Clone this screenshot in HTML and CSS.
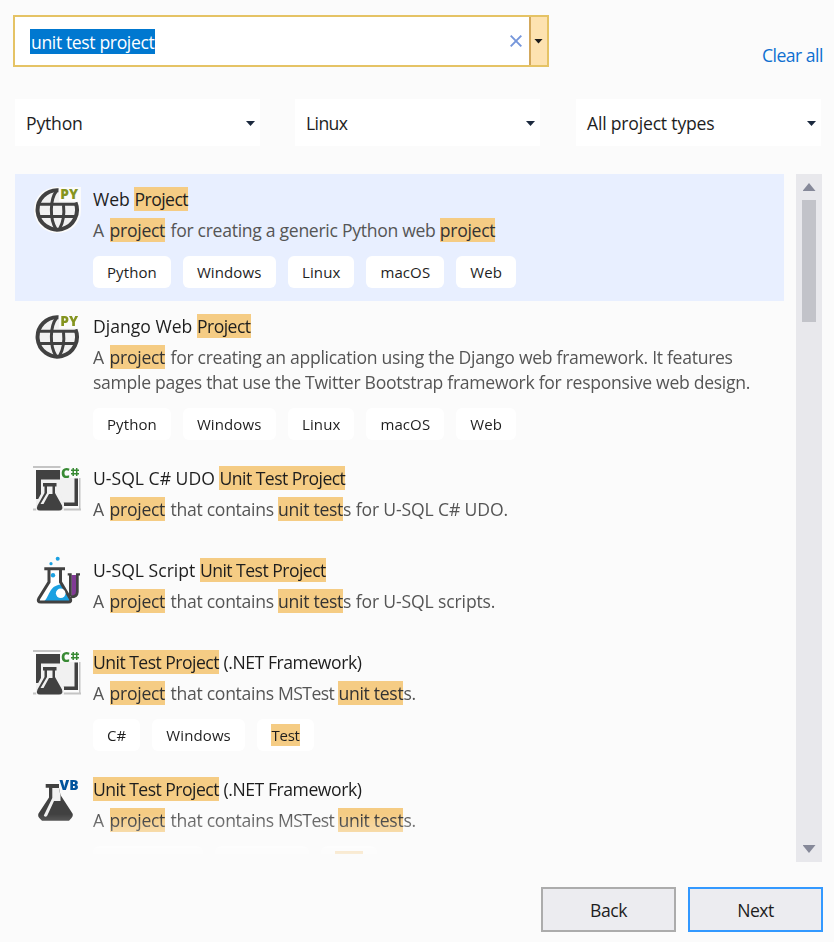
FILE: index.html
```html
<!DOCTYPE html>
<html lang="en">
<head>
<meta charset="utf-8">
<title>Create a new project</title>
<link rel="stylesheet" href="styles.css">
</head>
<body>
<svg class="defs" aria-hidden="true">
  <symbol id="globe" viewBox="0 0 48 48">
    <path d="M23 0C10 1 1 10 1 23s10 23 23.500 23 23.500-10 23.500-23V0z" fill="#fbfbfb"/>
    <circle cx="24.500" cy="23" r="19.500" fill="#f1f1f1"/>
    <path d="M25.500 3.300A19.700 19.700 0 1 0 42.500 15.500" fill="none" stroke="#414141" stroke-width="4"/>
    <path d="M6 17.300H44M6 29.500H43" fill="none" stroke="#414141" stroke-width="3"/>
    <path d="M23.500 4C17 12 16.500 32 23 42M30.500 18C31.500 27 30.500 35 26.500 42" fill="none" stroke="#414141" stroke-width="3"/>
    <path d="M26 0H48V14.500H26z" fill="#fbfbfb"/>
    <text x="27.300" y="12.300" class="badge" fill="#84941f" textLength="17.800" lengthAdjust="spacingAndGlyphs">PY</text>
  </symbol>
  <symbol id="cs" viewBox="0 0 48 48">
    <path d="M0 0H28V2H0zM0 42.500H5V44.500H0zM29 42.500H48V44.500H29zM46 12H47.500V42.500H46z" fill="#c4c4c4"/>
    <path d="M3 4H45V40H3z" fill="#f1f1f1"/>
    <path d="M3 4H27V13.500H8V33H3zM41.500 12.500H45V40H28V36.500H41.500z" fill="#414141"/>
    <path d="M8.500 15H25V22L31 37V45H3V37L8.500 27z" fill="#f1f1f1"/>
    <path d="M10 17H23.500V20.500H22V27L29 39.500Q30.500 44.500 26 44.500H7Q2.500 44.500 4.500 39.500L11.500 27V20.500H10z" fill="#414141"/>
    <path d="M14 20.500H19.500V28H16L10.500 38H7.500L14 27z" fill="#f1f1f1"/>
    <path d="M27.500 0H48V12H27.500z" fill="#fbfbfb"/>
    <text x="28" y="12.300" class="badge cs" fill="#388a34" textLength="9" lengthAdjust="spacingAndGlyphs">C</text>
    <path d="M40.200 2V10M43.700 2V10M38 4.300H46M38 7.700H46" stroke="#388a34" stroke-width="1.500"/>
  </symbol>
  <symbol id="usql" viewBox="0 0 48 52">
    <path d="M38.500 19H43V37Q42.500 41 38.500 40z" fill="#813a95"/>
    <path d="M34.700 17.300H38.700V40H36V19.500H34.700zM43 17.300H47V19.500H45.700V36Q45.500 42.300 38 42.300V39.500Q43 39.500 43 35z" fill="#414141"/>
    <path d="M16 14H27V27L38 46H5L16 27z" fill="#fff"/>
    <path d="M10 46C17 42 15 29.500 28 28.500L38 46H10z" fill="#1ba1e2"/>
    <path d="M11.300 12.700H32M16 13V26L5.800 42.500Q4 46 8 46H35Q39 46 37.200 42.500L27.500 26V13" fill="none" stroke="#414141" stroke-width="3"/>
    <circle cx="27.700" cy="37.300" r="4.800" fill="#fff"/>
    <circle cx="20" cy="19.300" r="2.200" fill="#1ba1e2"/>
    <circle cx="18" cy="7.700" r="1.600" fill="#1ba1e2"/>
    <circle cx="24.700" cy="2.700" r="2" fill="#1ba1e2"/>
  </symbol>
  <symbol id="vb" viewBox="0 0 48 48">
    <path d="M12.700 7H26V11L27.500 18L39.500 36.500Q40.500 39 38.500 41L36 43.700H9L6.300 41Q4.500 39 5.500 36.500L16 20.500V10.700H12.700z" fill="#414141"/>
    <path d="M19.300 11H26L27.500 19V24H21L14.300 38.500Q12.500 41 10.800 38.500L19.300 21z" fill="#f1f1f1"/>
    <text x="26.500" y="13" class="badge" fill="#00539c" textLength="19" lengthAdjust="spacingAndGlyphs">VB</text>
  </symbol>
</svg>

<div class="dialog">
  <header class="top">
    <div class="search">
      <div class="field"><span class="selected">unit test project</span>
        <svg class="clear" width="12" height="12" viewBox="0 0 12 12"><path d="M.7.700 11.300 11.300M11.300.700.700 11.300" stroke="#7596db" stroke-width="1.900"/></svg>
      </div>
      <div class="drop"><i class="caret"></i></div>
    </div>
    <a class="clear-all">Clear all</a>
  </header>

  <div class="filters">
    <div class="select"><span>Python</span><i class="caret"></i></div>
    <div class="select"><span class="tight">Linux</span><i class="caret"></i></div>
    <div class="select"><span>All project types</span><i class="caret"></i></div>
  </div>

  <div class="results">
    <div class="list">
      <div class="item active">
        <svg class="icon"><use href="#globe"/></svg>
        <div class="body">
          <div class="title">Web <mark>Project</mark></div>
          <div class="desc">A <mark>project</mark> for creating a generic Python web <mark>project</mark></div>
          <div class="tags"><span>Python</span><span>Windows</span><span>Linux</span><span>macOS</span><span>Web</span></div>
        </div>
      </div>
      <div class="item">
        <svg class="icon"><use href="#globe"/></svg>
        <div class="body">
          <div class="title">Django Web <mark>Project</mark></div>
          <div class="desc">A <mark>project</mark> for creating an application using the Django web framework. It features<br>sample pages that use the Twitter Bootstrap framework for responsive web design.</div>
          <div class="tags"><span>Python</span><span>Windows</span><span>Linux</span><span>macOS</span><span>Web</span></div>
        </div>
      </div>
      <div class="item plain">
        <svg class="icon"><use href="#cs"/></svg>
        <div class="body">
          <div class="title">U-SQL C# UDO <mark>Unit Test Project</mark></div>
          <div class="desc">A <mark>project</mark> that contains <mark>unit test</mark><span class="wide">s for U-SQL C# UDO.</span></div>
        </div>
      </div>
      <div class="item plain">
        <svg class="icon tall"><use href="#usql"/></svg>
        <div class="body">
          <div class="title">U-SQL Script <mark>Unit Test Project</mark></div>
          <div class="desc">A <mark>project</mark> that contains <mark>unit test</mark><span class="wide">s for U-SQL scripts.</span></div>
        </div>
      </div>
      <div class="item">
        <svg class="icon"><use href="#cs"/></svg>
        <div class="body">
          <div class="title"><mark>Unit Test Project</mark> <span class="suffix">(.NET Framework)</span></div>
          <div class="desc">A <mark>project</mark> that contains <span class="suffix">MSTest</span> <mark>unit test</mark>s.</div>
          <div class="tags"><span>C#</span><span>Windows</span><span><mark>Test</mark></span></div>
        </div>
      </div>
      <div class="item">
        <svg class="icon"><use href="#vb"/></svg>
        <div class="body">
          <div class="title"><mark>Unit Test Project</mark> <span class="suffix">(.NET Framework)</span></div>
          <div class="desc">A <mark>project</mark> that contains <span class="suffix">MSTest</span> <mark>unit test</mark>s.</div>
          <div class="tags"><span>Visual Basic</span><span>Windows</span><span><mark>Test</mark></span></div>
        </div>
      </div>
    </div>
    <div class="scrollbar"><i class="up"></i><div class="thumb"></div><i class="down"></i></div>
  </div>

  <footer class="actions">
    <button>Back</button>
    <button class="primary">Next</button>
  </footer>
</div>
</body>
</html>
```

FILE: styles.css
```css
* { box-sizing: border-box; }
body {
  margin: 0;
  background: #fbfbfb;
  color: #1e1e1e;
  font: 17.6px/25px "Open Sans", "Noto Sans", sans-serif;
}
.defs { display: none; }
.dialog { width: 834px; height: 942px; padding: 15px 11px 0 13px; overflow: hidden; }
.top { display: flex; justify-content: space-between; height: 52px; }
.search { display: flex; width: 536px; border: 2px solid #e5c365; background: #fff; }
.field { flex: 1; display: flex; align-items: center; justify-content: space-between; padding: 0 7px 0 15px; }
.selected { height: 25px; margin-top: 1px; padding: 0 1px; background: #0078d0; color: #fff; white-space: nowrap; letter-spacing: -.38px; line-height: 26px; }
.drop { width: 18px; background: #fde2b0; border-left: 2px solid #d3a85c; display: flex; align-items: center; justify-content: center; }
.caret { width: 9px; height: 5px; background: #1b1b1b; clip-path: polygon(0 0, 100% 0, 50% 100%); }
.drop .caret { margin-right: 1px; }
.clear-all { margin-top: 28px; color: #0e6fd0; white-space: nowrap; letter-spacing: -.5px; }
.filters { display: grid; grid-template-columns: 245px 245px 245px; column-gap: 35px; margin: 32px 0 0 2px; }
.select { height: 47px; padding: 1px 5px 0 11px; background: #fff; display: flex; align-items: center; justify-content: space-between; letter-spacing: -.2px; }
.select:last-child { margin: 0 -1px 0 1px; }
.select .tight { letter-spacing: -.6px; }
.select .caret { background: #1b293e; margin-top: 1px; }
.results { display: flex; justify-content: space-between; margin: 28px 1px 0 2px; height: 688px; }
.list { width: 769px; height: 680px; overflow: hidden; mask-image: linear-gradient(#000 640px, rgba(0, 0, 0, .3) 680px); }
.item { display: flex; padding: 13px 0 13px 18px; }
.item.active { background: #e8efff; }
.item.plain { padding-bottom: 23px; }
.icon { flex: none; width: 48px; height: 48px; margin-right: 12px; }
.icon.tall { height: 52px; margin: -2px 12px -2px 0; }
.body { white-space: nowrap; }
.title, .desc { height: 25px; }
.desc { height: auto; margin-top: 6px; color: #555; letter-spacing: -.3px; }
mark { display: inline-block; height: 24px; vertical-align: top; background: #f5cc84; color: #1e1e1e; }
.title mark { letter-spacing: -.54px; }
.suffix { letter-spacing: -.45px; }
.desc .suffix { letter-spacing: -.6px; }
.wide { letter-spacing: -.15px; }
.desc mark { color: #333; }
.desc mark:first-child { margin: 0 1.2px 0 1.5px; }
.tags { display: flex; gap: 12px; margin-top: 13px; }
.tags span { height: 32px; padding: 0 14px; border-radius: 6px; background: #fff; font-size: 15px; line-height: 32px; letter-spacing: .1px; }
.tags span:nth-child(2) { padding-right: 14.6px; }
.tags mark { height: 22px; line-height: 22px; margin-top: 5px; letter-spacing: -.25px; }
.badge { font: 800 14.5px "Open Sans", sans-serif; }
.scrollbar { width: 26px; background: #e8e8ec; display: flex; flex-direction: column; align-items: center; padding: 9px 0; }
.up, .down { width: 13px; height: 8px; background: #868999; clip-path: polygon(50% 0, 100% 100%, 0 100%); }
.down { margin-top: auto; clip-path: polygon(0 0, 100% 0, 50% 100%); }
.thumb { width: 14px; height: 122px; margin-top: 9px; background: #c2c3c9; }
.actions { display: flex; justify-content: flex-end; gap: 12px; margin-top: 25px; }
button { width: 135px; height: 45px; border: 2px solid #acacac; background: #ececf0; color: #1e1e1e; font: inherit; letter-spacing: -.5px; padding: 2px 0 0; }
.primary { border-color: #3399ff; }
```
